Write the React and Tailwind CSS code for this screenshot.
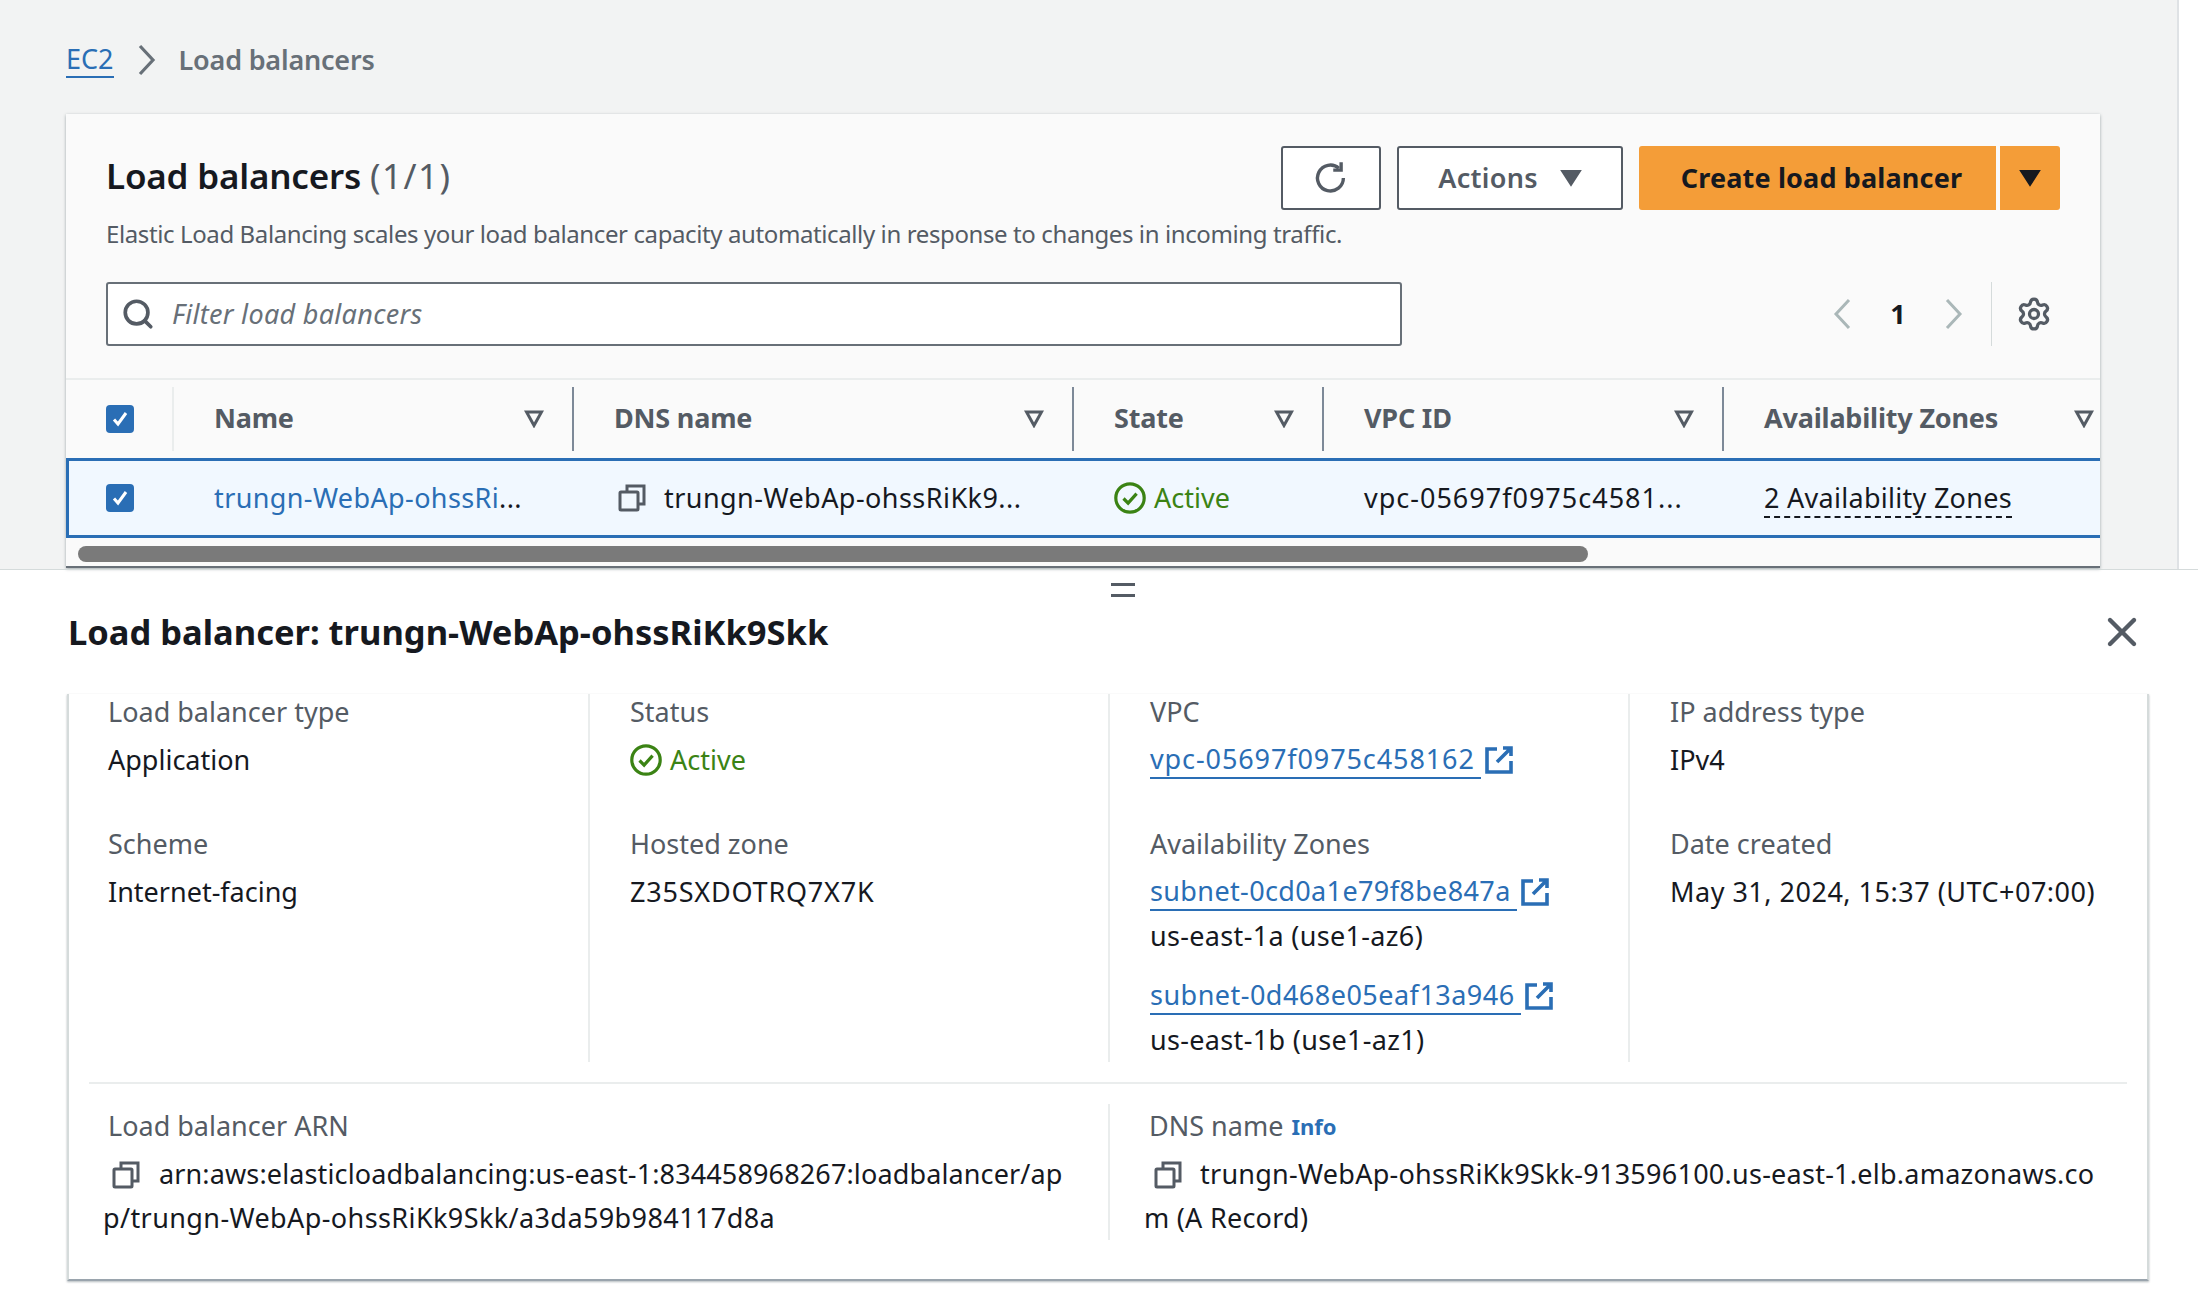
import { Settings, Search, X } from 'lucide-react'

function CopyIcon({ className = '' }) {
  return (
    <svg viewBox="0 0 28 28" className={`w-7 h-7 inline-block shrink-0 ${className}`} fill="none" stroke="#545b64" strokeWidth="3">
      <rect x="2" y="8" width="18" height="18" rx="1" />
      <path d="M9 7V2h17v18h-5" />
    </svg>
  )
}

function ExternalIcon() {
  return (
    <svg viewBox="0 0 28 28" className="w-7 h-7 inline-block shrink-0 ml-[4px]" fill="none" stroke="#2a6eb5" strokeWidth="3.6">
      <path d="M12 3H2v23h24V15" />
      <path d="M18 2h8v8M26 2L12 16" />
    </svg>
  )
}

function StatusIcon() {
  return (
    <svg viewBox="0 0 32 32" className="w-8 h-8 shrink-0" fill="none" stroke="#3b8314" strokeWidth="3.2">
      <circle cx="16" cy="16" r="14.2" />
      <path d="M9.5 16.5l4.6 4.6 8.5-9.5" />
    </svg>
  )
}

function Caret() {
  return (
    <svg viewBox="0 0 20 18" className="w-5 h-[18px]" fill="none" stroke="#545b64" strokeWidth="3">
      <path d="M2.5 2h15L10 15.5z" />
    </svg>
  )
}

function SolidCaret({ color }) {
  return (
    <svg viewBox="0 0 22 18" className="w-[22px] h-[18px]" fill={color} stroke={color} strokeWidth="2">
      <path d="M2 2h18L11 16z" />
    </svg>
  )
}

function CheckBox() {
  return (
    <span className="w-7 h-7 rounded-[4px] bg-[#2a6eb5] flex items-center justify-center">
      <svg viewBox="0 0 20 20" className="w-5 h-5" fill="none" stroke="#fff" strokeWidth="3">
        <path d="M4 10.5l4 4.5 8-11" />
      </svg>
    </span>
  )
}

function Th({ label, last }) {
  return (
    <div className={`h-[64px] flex items-center justify-between pl-10 ${last ? 'pr-[6px]' : 'pr-[28px] border-r-2 border-[#7d8998]'}`}>
      <span className="font-bold text-[#545b64] tracking-[-0.2px] -mt-[2px]">{label}</span>
      <Caret />
    </div>
  )
}

function Field({ label, children, className = '' }) {
  return (
    <div className={className}>
      <div className="text-[#545b64] h-9 flex items-center">{label}</div>
      <div className="text-[#16191f] mt-2 leading-[44px]">{children}</div>
    </div>
  )
}

function ExtLink({ children, tracking }) {
  return (
    <div className="flex items-center h-11">
      <a className={`text-[#2a6eb5] border-b-2 border-[#2a6eb5] h-[38px] leading-[36px] pr-[6px] ${tracking}`}>{children}</a>
      <ExternalIcon />
    </div>
  )
}

export default function App() {
  return (
    <div className="w-[2198px] h-[1294px] overflow-hidden bg-white text-[27px] text-[#16191f] font-['Noto_Sans',sans-serif] flex flex-col">
      {/* top part */}
      <div className="h-[569px] shrink-0 w-[2179px] bg-[#f2f3f3] border-r-2 border-[#dfe2e5] pl-[66px] pt-[36px]">
        <div className="flex items-center h-12">
          <a className="text-[#2a6eb5] border-b-2 border-[#2a6eb5] leading-[34px]">EC2</a>
          <svg viewBox="0 0 18 32" className="w-[18px] h-8 ml-[24px] mr-[23px]" fill="none" stroke="#687078" strokeWidth="3.2">
            <path d="M2 2l13 14L2 30" />
          </svg>
          <span className="text-[#687078] font-semibold tracking-[-0.2px]">Load balancers</span>
        </div>

        <div className="w-[2034px] mt-[30px] bg-[#fafafa] shadow-[0_1px_3px_rgba(0,28,36,0.35)] border-b-2 border-[#687078]">
          <div className="px-10 pt-8">
            <div className="flex items-center justify-between h-[64px]">
              <h1 className="text-[35px] font-semibold -mt-1 tracking-[-0.2px]">Load balancers <span className="font-normal text-[#545b64] tracking-[1.5px]">(1/1)</span></h1>
              <div className="flex items-center">
                <button className="w-[100px] h-[64px] border-2 border-[#545b64] rounded-[3px] bg-white flex items-center justify-center">
                  <svg viewBox="0 0 32 32" className="w-9 h-9" fill="none" stroke="#545b64" strokeWidth="3">
                    <path d="M27 16a11.5 11.5 0 1 1-4-8.7" />
                    <path d="M25 2v7h-7" />
                  </svg>
                </button>
                <button className="w-[226px] h-[64px] ml-4 border-2 border-[#545b64] rounded-[3px] bg-white flex items-center justify-center gap-[22px] font-semibold text-[#545b64] tracking-[0.3px]">
                  Actions <SolidCaret color="#545b64" />
                </button>
                <button className="w-[357px] h-[64px] ml-4 pl-2 rounded-l-[3px] bg-[#f49d38] font-bold text-[#16191f] tracking-[0.15px]">Create load balancer</button>
                <button className="w-[60px] h-[64px] ml-1 rounded-r-[3px] bg-[#f49d38] flex items-center justify-center">
                  <SolidCaret color="#16191f" />
                </button>
              </div>
            </div>
            <p className="text-[#545b64] text-[24px] leading-[44px] mt-[2px] tracking-[-0.39px]">Elastic Load Balancing scales your load balancer capacity automatically in response to changes in incoming traffic.</p>
            <div className="flex items-center mt-[26px] h-16">
              <div className="w-[1296px] h-16 border-2 border-[#687078] rounded-[3px] bg-white flex items-center pl-[13px]">
                <Search size={34} color="#545b64" strokeWidth={2.6} />
                <span className="italic text-[#687078] ml-[17px] tracking-[0.3px]">Filter load balancers</span>
              </div>
              <div className="flex-1 flex items-center justify-end pr-[8px]">
                <svg viewBox="0 0 18 32" className="w-[18px] h-8" fill="none" stroke="#aab7b8" strokeWidth="3"><path d="M16 2L3 16l13 14" /></svg>
                <span className="font-bold w-[94px] text-center">1</span>
                <svg viewBox="0 0 18 32" className="w-[18px] h-8" fill="none" stroke="#aab7b8" strokeWidth="3"><path d="M2 2l13 14L2 30" /></svg>
                <div className="h-16 border-l border-[#d5dbdb] ml-[28px] mr-[24px]" />
                <Settings size={36} color="#545b64" strokeWidth={2.2} />
              </div>
            </div>
          </div>

          <div className="mt-8 border-t-2 border-[#eaeded]">
            <div className="grid grid-cols-[108px_400px_500px_250px_400px_1fr] items-center h-[78px]">
              <div className="h-[64px] flex items-center pl-10 border-r-2 border-[#eaeded]"><CheckBox /></div>
              <Th label="Name" />
              <Th label="DNS name" />
              <Th label="State" />
              <Th label="VPC ID" />
              <Th label="Availability Zones" last />
            </div>
            <div className="grid grid-cols-[105px_400px_500px_250px_400px_1fr] items-center h-[80px] bg-[#f1f8ff] border-y-[3px] border-l-[3px] border-[#2a6eb5]">
              <div className="pl-[37px]"><CheckBox /></div>
              <div className="pl-10 text-[#2a6eb5] tracking-[0.38px]">trungn-WebAp-ohssRi<span className="text-[#16191f]">...</span></div>
              <div className="pl-[44px] flex items-center gap-[18px] tracking-[0.45px]"><CopyIcon /><span>trungn-WebAp-ohssRiKk9...</span></div>
              <div className="pl-10 flex items-center gap-2 text-[#3b8314]"><StatusIcon />Active</div>
              <div className="pl-10 tracking-[1px]">vpc-05697f0975c4581...</div>
              <div className="pl-10 tracking-[0.28px]"><span className="border-b-2 border-dashed border-[#16191f]">2 Availability Zones</span></div>
            </div>
            <div className="h-[28px] pl-3 pt-[8px]">
              <div className="w-[1510px] h-4 rounded-full bg-[#7a7a7a]" />
            </div>
          </div>
        </div>
      </div>

      {/* detail split panel */}
      <div className="flex-1 border-t border-[#d5dbdb] px-[67px]">
        <div className="flex justify-center w-[2190px] -ml-[67px] -mt-[1px] pt-[14px]">
          <div className="w-6 h-[14px] border-y-[3px] border-[#545b64] ml-[56px]" />
        </div>
        <div className="flex items-center justify-between h-[64px] mt-[3px]">
          <h2 className="text-[34.5px] font-bold ml-[1px]">Load balancer: trungn-WebAp-ohssRiKk9Skk</h2>
          <X size={48} color="#545b64" strokeWidth={2.2} className="translate-x-[15px]" />
        </div>

        <div className="w-[2082px] h-[587px] mt-[31px] border-x-2 border-b-2 border-[#d5dbdb] border-b-[#9aa4ad] shadow-[0_1px_2px_rgba(0,28,36,0.3)]">
          <div className="grid grid-cols-[521px_520px_520px_1fr] h-[366px] -mt-[1px]">
            <div className="border-r-2 border-[#eaeded] pl-[39px]">
              <Field label="Load balancer type">Application</Field>
              <Field label="Scheme" className="mt-11">Internet-facing</Field>
            </div>
            <div className="border-r-2 border-[#eaeded] pl-[40px]">
              <Field label="Status">
                <div className="flex items-center gap-2 text-[#3b8314]"><StatusIcon />Active</div>
              </Field>
              <Field label="Hosted zone" className="mt-11"><span className="tracking-[0.8px]">Z35SXDOTRQ7X7K</span></Field>
            </div>
            <div className="border-r-2 border-[#eaeded] pl-[40px]">
              <Field label="VPC"><ExtLink tracking="tracking-[0.9px]">vpc-05697f0975c458162</ExtLink></Field>
              <Field label="Availability Zones" className="mt-11">
                <ExtLink tracking="tracking-[0.37px]">subnet-0cd0a1e79f8be847a</ExtLink>
                <div className="h-11 tracking-[0.33px]">us-east-1a (use1-az6)</div>
                <div className="mt-4"><ExtLink tracking="tracking-[0.48px]">subnet-0d468e05eaf13a946</ExtLink></div>
                <div className="h-11 tracking-[0.33px]">us-east-1b (use1-az1)</div>
              </Field>
            </div>
            <div className="pl-10">
              <Field label="IP address type">IPv4</Field>
              <Field label="Date created" className="mt-11"><span className="tracking-[0.5px]">May 31, 2024, 15:37 (UTC+07:00)</span></Field>
            </div>
          </div>
          <div className="mx-[20px] mt-[22px] border-t-2 border-[#eaeded]" />
          <div className="grid grid-cols-[1041px_1fr] mt-5">
            <div className="border-r-2 border-[#eaeded] h-[136px] pl-[34px]">
              <div className="text-[#545b64] h-11 flex items-center pl-[5px]">Load balancer ARN</div>
              <div className="break-all leading-[44px] w-[968px] mt-1"><CopyIcon className="ml-[9px] mr-[19px] align-[-5px]" /><span className="tracking-[0.13px]">arn:aws:elasticloadbalancing:us-east-1:834458968267:loadbalancer/ap</span><span className="tracking-[0.4px]">p/trungn-WebAp-ohssRiKk9Skk/a3da59b984117d8a</span></div>
            </div>
            <div className="pl-[34px]">
              <div className="text-[#545b64] h-11 flex items-center pl-[5px] gap-2">DNS name <span className="text-[22px] font-bold text-[#2a6eb5]">Info</span></div>
              <div className="break-all leading-[44px] w-[956px] mt-1 tracking-[0.25px]"><CopyIcon className="ml-[10px] mr-[18px] align-[-5px]" />trungn-WebAp-ohssRiKk9Skk-913596100.us-east-1.elb.amazonaws.com (A Record)</div>
            </div>
          </div>
        </div>
      </div>
    </div>
  )
}
